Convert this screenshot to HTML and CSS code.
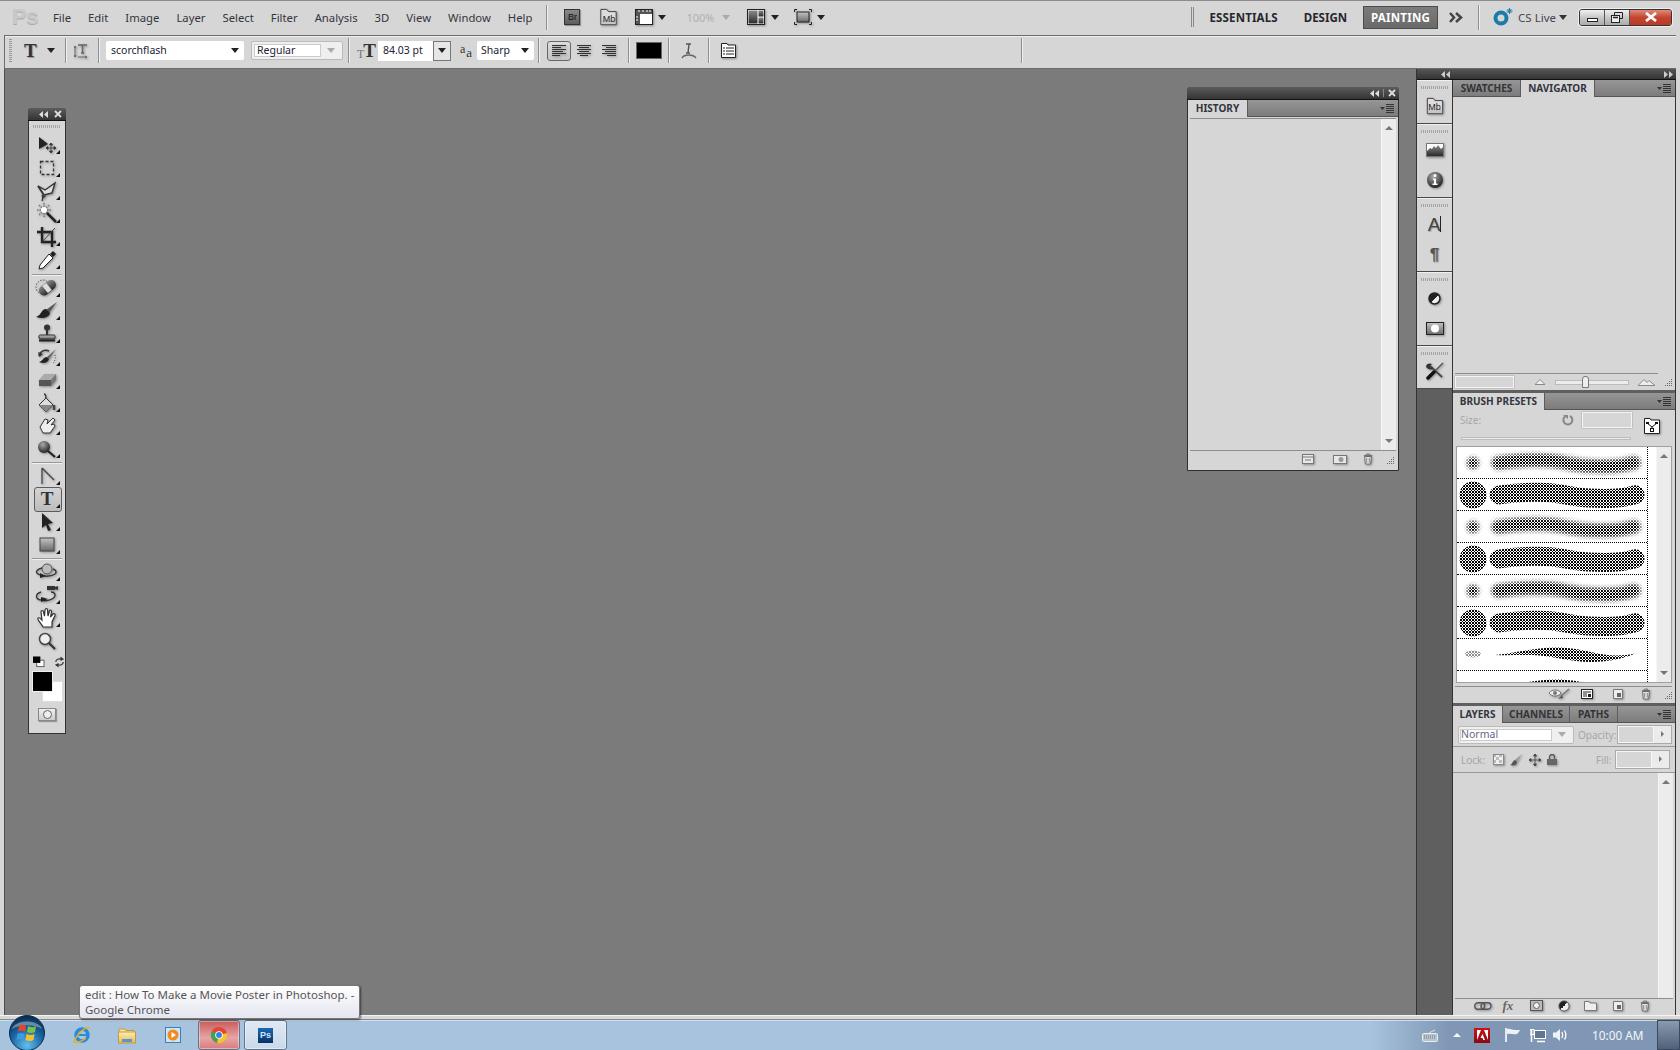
FILE: index.html
```html
<!DOCTYPE html>
<html lang="en">
<head>
<meta charset="utf-8">
<title>Adobe Photoshop CS5</title>
<link rel="stylesheet" href="styles.css">
</head>
<body>
<svg class="defs" aria-hidden="true">
  <defs>
    <pattern id="chk" width="3" height="3" patternUnits="userSpaceOnUse">
      <rect width="3" height="3" fill="#fff"/>
      <rect width="1.500" height="1.500" fill="#000" shape-rendering="crispEdges"/>
      <rect x="1.500" y="1.500" width="1.500" height="1.500" fill="#000" shape-rendering="crispEdges"/>
    </pattern>
    <linearGradient id="gDark" x1="0" y1="0" x2="0" y2="1"><stop offset="0" stop-color="#8a8a8a"/><stop offset="1" stop-color="#2a2a2a"/></linearGradient>
    <linearGradient id="gMid" x1="0" y1="0" x2="0" y2="1"><stop offset="0" stop-color="#c4c4c4"/><stop offset="1" stop-color="#6a6a6a"/></linearGradient>
    <linearGradient id="gDiag" x1="0" y1="0" x2="1" y2="1"><stop offset="0" stop-color="#222"/><stop offset=".5" stop-color="#222"/><stop offset=".5" stop-color="#eee"/><stop offset="1" stop-color="#eee"/></linearGradient>
    <radialGradient id="gBall" cx=".4" cy=".3" r=".8"><stop offset="0" stop-color="#aaa"/><stop offset="1" stop-color="#111"/></radialGradient>
    <radialGradient id="gOrb" cx=".5" cy=".85" r=".8"><stop offset="0" stop-color="#5fc0ee"/><stop offset=".55" stop-color="#1d6aa8"/><stop offset="1" stop-color="#0a2f55"/></radialGradient>
    <linearGradient id="gFolder" x1="0" y1="0" x2="0" y2="1"><stop offset="0" stop-color="#fff0b0"/><stop offset="1" stop-color="#e0b95a"/></linearGradient>
    <filter id="soft" x="-30%" y="-60%" width="160%" height="220%"><feGaussianBlur stdDeviation="2.200"/></filter>
    <mask id="mSoft"><g filter="url(#soft)"><circle cx="16" cy="16" r="6" fill="#fff"/><path d="M41 16C60 13 75 13 89 13.500S115 18 132 19S165 20 177 15.700" fill="none" stroke="#fff" stroke-width="13" stroke-linecap="round"/></g></mask>
    <symbol id="softRow" viewBox="0 0 191 31"><rect width="191" height="31" fill="url(#chk)" mask="url(#mSoft)"/></symbol>
    <symbol id="hardRow" viewBox="0 0 191 31"><circle cx="16" cy="16" r="13.500" fill="url(#chk)"/><path d="M42 16C60 13 75 13 89 13.500S115 18 132 19S165 20 178 15.700" fill="none" stroke="url(#chk)" stroke-width="19" stroke-linecap="round"/></symbol>
    <symbol id="chalkRow" viewBox="0 0 191 31"><ellipse cx="16" cy="15" rx="8" ry="3.500" fill="url(#chk)" opacity=".45"/><path d="M38 16C70 12 85 7 110 9S150 21 180 14C150 26 125 24 100 19S60 17 38 16Z" fill="url(#chk)"/></symbol>
    <symbol id="collapseL" viewBox="0 0 9 7"><path d="M4 0V7L0 3.500ZM9 0V7L5 3.500Z" fill="currentColor"/></symbol>
    <symbol id="collapseR" viewBox="0 0 9 7"><path d="M0 0V7L4 3.500ZM5 0V7L9 3.500Z" fill="currentColor"/></symbol>
    <symbol id="closeX" viewBox="0 0 8 8"><path d="M1 1L7 7M7 1L1 7" stroke="currentColor" stroke-width="1.800"/></symbol>
    <symbol id="pmenu" viewBox="0 0 14 9"><path d="M0 3H5L2.500 6Z" fill="#333"/><path d="M6 .5H14M6 2.500H14M6 4.500H14M6 6.500H14M6 8.500H14" stroke="#333"/></symbol>
    <symbol id="grip" viewBox="0 0 9 9"><path d="M7 1h1v1H7zM5 3h1v1H5zM7 3h1v1H7zM3 5h1v1H3zM5 5h1v1H5zM7 5h1v1H7zM1 7h1v1H1zM3 7h1v1H3zM5 7h1v1H5zM7 7h1v1H7z" fill="#666"/></symbol>
    <symbol id="trash" viewBox="0 0 12 14"><path d="M4 2V1H8V2M1 3H11" stroke="#555" fill="none"/><path d="M2 4H10L9.200 13H2.800Z" fill="#eee" stroke="#555"/><path d="M4.500 5.500V11.500M7.500 5.500V11.500" stroke="#666"/></symbol>
    <symbol id="newdoc" viewBox="0 0 12 12"><path d="M1.500 1.500H10.500V10.500H1.500Z" fill="#ededed" stroke="#777"/><path d="M5 5H9V9H5Z" fill="#666"/></symbol>
    <symbol id="mb" viewBox="0 0 20 20"><path d="M1.500 1.500H8L10 4H18.500V18.500H1.500Z" fill="#dcdcdc" stroke="#333"/><path d="M2 13H18V18H2Z" fill="#b8b8b8" opacity=".6"/></symbol>
    <symbol id="eyedrop" viewBox="0 0 24 22"><path d="M18 2L21 5L18 8L15 5Z" fill="#222"/><path d="M14 5L18 9L8 19L4 20L5 16Z" fill="#fff" stroke="#222"/></symbol>
  </defs>
</svg>

<div class="app">
  <header class="menubar">
    <span class="pslogo">Ps</span>
    <nav class="menus">
      <span>File</span><span>Edit</span><span>Image</span><span>Layer</span><span>Select</span><span>Filter</span><span>Analysis</span><span>3D</span><span>View</span><span>Window</span><span>Help</span>
    </nav>
    <i class="vsep sep-help"></i>
    <span class="br-ic">Br</span>
    <svg class="ic mb-top" width="19" height="18" viewBox="0 0 20 20"><use href="#mb"/></svg>
    <span class="mb-label">Mb</span>
    <svg class="ic arrange" width="18" height="16" viewBox="0 0 18 16"><rect x=".5" y=".5" width="17" height="15" fill="#fff" stroke="#222"/><path d="M1 1H17V5H1ZM1 5H5V15H1Z" fill="#555"/><path d="M4 1V3M8 1V3M12 1V3M15 1V3M1 8H3M1 11H3" stroke="#fff"/></svg>
    <i class="caret c-arr"></i>
    <span class="zoomtxt">100%</span>
    <i class="caret caret-dis"></i>
    <svg class="ic layout" width="18" height="16" viewBox="0 0 18 16"><rect x=".5" y=".5" width="17" height="15" fill="#fff" stroke="#222"/><rect x="1.500" y="1.500" width="9" height="13" fill="url(#gDark)"/><rect x="11.500" y="1.500" width="5" height="6" fill="url(#gDark)"/><rect x="11.500" y="8.500" width="5" height="6" fill="url(#gDark)"/></svg>
    <i class="caret c-lay"></i>
    <svg class="ic screen" width="18" height="16" viewBox="0 0 18 16"><path d="M.5 3V.5H3M15 .5H17.500V3M.5 13V15.500H3M15 15.500H17.500V13" fill="none" stroke="#222"/><rect x="3" y="3" width="12" height="10" fill="url(#gMid)" stroke="#222"/></svg>
    <i class="caret c-scr"></i>
    <span class="spacer"></span>
    <i class="dblsep"></i>
    <span class="ws ws-ess">ESSENTIALS</span>
    <span class="ws ws-des">DESIGN</span>
    <span class="ws ws-on">PAINTING</span>
    <svg class="more" width="15" height="11" viewBox="0 0 15 11"><path d="M1 1L5 5.500L1 10M7 1L12 5.500L7 10" fill="none" stroke="#444" stroke-width="2.500"/></svg>
    <i class="vsep sep-cs"></i>
    <svg class="cs" width="21" height="18" viewBox="0 0 21 18"><circle cx="8" cy="10" r="5.500" fill="none" stroke="#1c7ba8" stroke-width="4"/><path d="M16.500 0V6M13.500 3H19.500M14.500 1L18.500 5M18.500 1L14.500 5" stroke="#1c7ba8"/></svg>
    <span class="cslive">CS Live</span>
    <i class="caret c-cs"></i>
    <div class="winbtns">
      <span class="wb wb-min"><i></i></span>
      <span class="wb wb-max"><svg width="12" height="11" viewBox="0 0 12 11"><path d="M3.500 3V.5H11.500V6.500H8.500" fill="none" stroke="#222"/><rect x=".5" y="3.500" width="8" height="7" fill="#eee" stroke="#222"/><path d="M2 5.500H7" stroke="#222" stroke-width="1.500"/></svg></span>
      <span class="wb wb-close"><svg width="14" height="10" viewBox="0 0 14 10"><path d="M2 1L12 9M12 1L2 9" stroke="#fff" stroke-width="2.800"/></svg></span>
    </div>
  </header>

  <div class="optbar">
    <i class="dots-v"></i>
    <span class="opt-t">T</span>
    <i class="caret c-t"></i>
    <i class="vsep s-a"></i>
    <svg class="ic orient" width="14" height="16" viewBox="0 0 14 16"><path d="M1 3V14M1 3L0 5M1 3L2 5M1 14L0 12M1 14L2 12" stroke="#666" fill="none"/><path d="M4 2H13M8.500 2V10M7 10H10" stroke="#666" stroke-width="1.500"/><path d="M4 14H13M13 14L11 13M13 14L11 15" stroke="#666" fill="none"/></svg>
    <i class="vsep s-b"></i>
    <div class="combo c-font"><span>scorchflash</span><i class="caret"></i></div>
    <div class="combo c-style"><span class="inner">Regular</span><i class="caret caret-dis"></i></div>
    <i class="vsep s-c"></i>
    <span class="opt-tt"><small>T</small>T</span>
    <div class="sizebox"><span>84.03 pt</span><b><i class="caret"></i></b></div>
    <span class="opt-aa"><small>a</small>a</span>
    <div class="combo c-aa"><span>Sharp</span><i class="caret"></i></div>
    <i class="vsep s-d"></i>
    <span class="alignbtn on"><svg class="ic" width="15" height="12" viewBox="0 0 15 12"><path d="M0 .5H14M0 2.500H9M0 4.500H14M0 6.500H11M0 8.500H14M0 10.500H8" stroke="#333"/></svg></span>
    <svg class="ic al-c" width="14" height="12" viewBox="0 0 14 12"><path d="M0 .5H14M2 2.500H12M0 4.500H14M2 6.500H12M0 8.500H14M3 10.500H11" stroke="#333"/></svg>
    <svg class="ic al-r" width="14" height="12" viewBox="0 0 14 12"><path d="M0 .5H14M4 2.500H14M0 4.500H14M3 6.500H14M0 8.500H14M5 10.500H14" stroke="#333"/></svg>
    <i class="vsep s-e"></i>
    <span class="colorbox"></span>
    <i class="vsep s-f"></i>
    <svg class="warp" width="16" height="18" viewBox="0 0 16 18"><path d="M5 2H10M8 2L7 11M5 11H9" stroke="#555" stroke-width="1.400" fill="none"/><path d="M1 16C3 12 12 12 15 16" stroke="#666" stroke-width="1.400" fill="none"/></svg>
    <i class="vsep s-g"></i>
    <svg class="ic panels" width="15" height="15" viewBox="0 0 15 15"><path d="M.5 .5H6L7 2H14.500V14.500H.5Z" fill="#fff" stroke="#222"/><path d="M2 5H4M5 5H13M2 8H4M5 8H13M2 11H4M5 11H13" stroke="#222" stroke-width="1.200"/></svg>
    <i class="vsep s-h"></i>
  </div>

  <main class="work">
    <section class="canvas">
      <aside class="toolbox">
        <div class="fhead fhead-tool"><svg class="fa" width="9" height="7"><use href="#collapseL"/></svg><svg class="fx" width="8" height="8"><use href="#closeX"/></svg></div>
        <i class="dots-h"></i>
        <div class="tool fly"><svg class="ic" width="24" height="22" viewBox="0 0 24 22"><path d="M4 3L13 10L4 15Z" fill="#222"/><path d="M16 9V19M11 14H21M16 9L14.500 11H17.500ZM16 19L14.500 17H17.500ZM11 14L13 12.500V15.500ZM21 14L19 12.500V15.500Z" stroke="#333" fill="#333" stroke-width=".8"/></svg></div>
        <div class="tool fly"><svg class="ic" width="24" height="22" viewBox="0 0 24 22"><rect x="5.500" y="4.500" width="13" height="13" fill="none" stroke="#333" stroke-width="1.300" stroke-dasharray="3 2"/></svg></div>
        <div class="tool fly"><svg class="ic" width="24" height="22" viewBox="0 0 24 22"><path d="M3 6L10 10L20 3L17 13L9 15Z" fill="#ddd" stroke="#333" stroke-width="1.400"/><path d="M3 6L9 15" stroke="#333" stroke-width="1.400"/><circle cx="8.500" cy="16" r="2" fill="#444"/><path d="M8 17L7 21" stroke="#333" stroke-width="1.300"/></svg></div>
        <div class="tool fly"><svg class="ic" width="24" height="22" viewBox="0 0 24 22"><path d="M9 0V14M2 7H16M4 2L14 12M14 2L4 12" stroke="#777" stroke-width="1.500" stroke-dasharray="1.500 1"/><circle cx="9" cy="7" r="3" fill="#fff"/><path d="M12 10L21 19" stroke="#222" stroke-width="2.500"/></svg></div>
        <div class="tool fly"><svg class="ic" width="24" height="22" viewBox="0 0 24 22"><path d="M7 1V16H21M2 6H17V21" fill="none" stroke="#222" stroke-width="2.400"/><path d="M7 16L20 2" stroke="#444"/></svg></div>
        <div class="tool fly"><svg class="ic" width="24" height="22"><use href="#eyedrop"/></svg></div>
        <i class="tsep tsep-a"></i>
        <div class="tool fly"><svg class="ic" width="24" height="22" viewBox="0 0 24 22"><circle cx="8" cy="10" r="7" fill="none" stroke="#555" stroke-dasharray="1.500 1.500"/><rect x="3" y="6" width="19" height="10" rx="5" transform="rotate(-38 12 11)" fill="url(#gDark)"/><rect x="9.500" y="6.500" width="5" height="9" transform="rotate(-38 12 11)" fill="#ddd"/></svg></div>
        <div class="tool fly"><svg class="ic" width="24" height="22" viewBox="0 0 24 22"><path d="M22 2L11 10L14 13Z" fill="#555"/><path d="M11 9C6 9 7 15 1 17C7 19 14 18 15 13Z" fill="#222"/></svg></div>
        <div class="tool fly"><svg class="ic" width="24" height="22" viewBox="0 0 24 22"><circle cx="12" cy="4.500" r="3" fill="#333"/><path d="M11 7H13V12H11Z" fill="#333"/><rect x="4" y="12" width="16" height="4" rx="1" fill="url(#gMid)" stroke="#333"/><path d="M4 17.500H20" stroke="#222" stroke-width="2"/></svg></div>
        <div class="tool fly"><svg class="ic" width="24" height="22" viewBox="0 0 24 22"><path d="M21 3L12 11L14 13Z" fill="#666"/><path d="M12 11C8 11 8 15 4 16C8 18 13 17 14 13Z" fill="#222"/><path d="M4 10C5 5 10 3 14 5" fill="none" stroke="#333" stroke-width="1.500"/><path d="M3 6L4.500 11L8 8Z" fill="#333"/><path d="M20 9C21 12 20 16 17 18" fill="none" stroke="#555" stroke-dasharray="1 1.500"/></svg></div>
        <div class="tool fly"><svg class="ic" width="24" height="22" viewBox="0 0 24 22"><path d="M9 5H21L16 11H4Z" fill="#aaa"/><path d="M4 11H16V17H4Z" fill="#555"/><path d="M16 11L21 5V11L16 17Z" fill="#777"/></svg></div>
        <div class="tool fly"><svg class="ic" width="24" height="22" viewBox="0 0 24 22"><path d="M9 2C11 2 11 5 11 7" fill="none" stroke="#333" stroke-width="1.300"/><path d="M11 6L18 13L11 20L4 13Z" fill="#ddd" stroke="#333"/><path d="M4 13H18L11 20Z" fill="#888"/><path d="M19 13V18" stroke="#444" stroke-width="2.500"/></svg></div>
        <div class="tool fly"><svg class="ic" width="24" height="22" viewBox="0 0 24 22"><path d="M8 18L5 12L10 4L13 5L12 9L18 3L20 5L16 10L19 9L20 11L15 18Z" fill="#eee" stroke="#333"/></svg></div>
        <div class="tool fly"><svg class="ic" width="24" height="22" viewBox="0 0 24 22"><circle cx="9" cy="9" r="6" fill="url(#gBall)"/><path d="M13 13L20 19" stroke="#222" stroke-width="2.200"/></svg></div>
        <i class="tsep"></i>
        <div class="tool fly"><svg class="ic" width="24" height="22" viewBox="0 0 24 22"><path d="M7 3V19M7 3L19 15" fill="none" stroke="#444" stroke-width="1.300"/></svg></div>
        <div class="tool fly selected"><span class="tglyph">T</span></div>
        <div class="tool fly"><svg class="ic" width="24" height="22" viewBox="0 0 24 22"><path d="M7 2L18 12L13 13L16 19L13 20L11 14L7 17Z" fill="#222"/></svg></div>
        <div class="tool fly"><svg class="ic" width="24" height="22" viewBox="0 0 24 22"><rect x="5" y="4" width="14" height="13" fill="url(#gMid)" stroke="#444"/></svg></div>
        <i class="tsep"></i>
        <div class="tool fly"><svg class="ic" width="24" height="22" viewBox="0 0 24 22"><circle cx="12" cy="8" r="5" fill="#bbb" stroke="#555"/><path d="M7 7C2 8 0 11 3 13C7 16 16 16 20 13C22 11 21 9 18 8" fill="none" stroke="#333" stroke-width="1.400"/><path d="M5 12L11 15L5 17Z" fill="#222"/></svg></div>
        <div class="tool fly"><svg class="ic" width="24" height="22" viewBox="0 0 24 22"><path d="M6 8C0 10 0 15 6 16C12 18 21 15 20 10C19.500 9 18 8 16 8" fill="none" stroke="#333" stroke-width="1.400"/><path d="M6 13L13 15L6 18Z" fill="#222"/><rect x="12" y="2" width="8" height="4" fill="#333"/><path d="M20 3L23 2V6L20 5Z" fill="#333"/></svg></div>
        <div class="tool fly"><svg class="ic" width="24" height="22" viewBox="0 0 24 22"><path d="M8 20C6 16 2 13 3 11C4 10 6 12 7 13L6 5C6 3 8 3 8.500 5L9.500 9L10 3C10.500 1 12.500 1 12.500 3L13 9L14.500 4C15 2.500 17 3 16.500 5L15.500 10L18 7C19 6 20.500 7 20 8.500L17 15V20Z" fill="#fff" stroke="#333" stroke-width="1.200"/></svg></div>
        <div class="tool"><svg class="ic" width="24" height="22" viewBox="0 0 24 22"><circle cx="10" cy="9" r="5.500" fill="#eee" stroke="#444" stroke-width="1.500"/><path d="M14 13L20 19" stroke="#333" stroke-width="2.200"/></svg></div>
        <div class="miniswatch">
          <svg width="13" height="12" viewBox="0 0 13 12"><rect x="4" y="4" width="8" height="7" fill="#fff" stroke="#555"/><rect x="0" y="0" width="8" height="7" fill="#000"/></svg>
          <svg width="12" height="12" viewBox="0 0 12 12"><path d="M2 6C2 3 5 2 8 3M10 6C10 9 7 10 4 9" fill="none" stroke="#333" stroke-width="1.300"/><path d="M7 0L11 3L7 5ZM5 7L1 9L5 12Z" fill="#333"/></svg>
        </div>
        <div class="fgbg"><span class="bg"></span><span class="fg"></span></div>
        <div class="quickmask"><i></i></div>
      </aside>

      <aside class="history">
        <div class="fhead"><svg class="fa" width="9" height="7"><use href="#collapseL"/></svg><b class="fdiv"></b><svg class="fx" width="8" height="8"><use href="#closeX"/></svg></div>
        <div class="tabs">
          <span class="tab on t-hist">HISTORY</span><span class="tabfill"></span><svg class="pm" width="14" height="9"><use href="#pmenu"/></svg>
        </div>
        <div class="hbody">
          <div class="hlist"></div>
          <div class="scroll"><i class="up"></i><i class="down"></i></div>
        </div>
        <div class="pfoot hfoot">
          <svg class="ic" width="12" height="10" viewBox="0 0 12 10"><rect x=".5" y=".5" width="11" height="9" fill="#e8e8e8" stroke="#777"/><path d="M.5 3H11.500M3 6H9" stroke="#777"/></svg>
          <svg class="ic" width="14" height="10" viewBox="0 0 14 10"><rect x=".5" y="1.500" width="13" height="8" fill="#e8e8e8" stroke="#777"/><circle cx="8" cy="5.500" r="2.500" fill="#999"/></svg>
          <svg class="ic" width="10" height="12" viewBox="0 0 12 14"><use href="#trash"/></svg>
          <svg class="gr" width="9" height="9"><use href="#grip"/></svg>
        </div>
      </aside>
    </section>

    <aside class="dock">
      <div class="dockstrip"><svg class="da" width="9" height="7"><use href="#collapseL"/></svg><svg class="db" width="9" height="7"><use href="#collapseR"/></svg></div>
      <div class="dockbody">
        <div class="iconcol">
          <div class="igroup g1"><i class="dots-h"></i><span class="dic"><svg class="ic" width="18" height="18" viewBox="0 0 20 20"><use href="#mb"/></svg><b class="mbtxt">Mb</b></span></div>
          <div class="igroup g2"><i class="dots-h"></i>
            <span class="dic"><svg class="ic" width="18" height="14" viewBox="0 0 18 14"><rect x=".5" y=".5" width="17" height="13" fill="#fff" stroke="#777"/><path d="M1 13V8L4 5L6 6L8 3L10 5L12 2L15 6L17 4V13Z" fill="url(#gDark)"/></svg></span>
            <span class="dic"><svg class="ic" width="18" height="18" viewBox="0 0 18 18"><circle cx="9" cy="9" r="8" fill="url(#gBall)"/><circle cx="9" cy="4.500" r="1.500" fill="#fff"/><path d="M7 7.500H10V12.500H11.500V14H6.500V12.500H8V9H7Z" fill="#fff"/></svg></span>
          </div>
          <div class="igroup g3"><i class="dots-h"></i>
            <span class="dic"><span class="chartxt">A</span><b class="cursorbar"></b></span>
            <span class="dic"><span class="paratxt">¶</span></span>
          </div>
          <div class="igroup g4"><i class="dots-h"></i>
            <span class="dic"><svg class="ic" width="13" height="13" viewBox="0 0 13 13"><circle cx="6.500" cy="6.500" r="5.500" fill="url(#gDiag)" stroke="#222" stroke-width="1.500"/></svg></span>
            <span class="dic"><svg class="ic" width="18" height="13" viewBox="0 0 18 13"><rect x=".5" y=".5" width="17" height="12" fill="url(#gMid)" stroke="#222"/><circle cx="9" cy="6.500" r="4" fill="#fff"/></svg></span>
          </div>
          <div class="igroup g5"><i class="dots-h"></i>
            <span class="dic"><svg class="ic" width="20" height="18" viewBox="0 0 20 18"><path d="M5 4L17 15" stroke="#444" stroke-width="1.700"/><path d="M1 4C2 1 5 1 7 2L5 4L6 6L8 5C8 8 5 8 4 7C3 7 1 6 1 4Z" fill="#333"/><path d="M18 1L9 10" stroke="#555" stroke-width="1.400"/><path d="M9 10L3 16" stroke="#111" stroke-width="3.500" stroke-linecap="round"/></svg></span>
          </div>
        </div>

        <div class="panels-col">
          <section class="panel p-nav">
            <div class="tabs">
              <span class="tab t-sw">SWATCHES</span><span class="tab on t-nav">NAVIGATOR</span><span class="tabfill"></span><svg class="pm" width="14" height="9"><use href="#pmenu"/></svg>
            </div>
            <div class="navbody"></div>
            <div class="navfoot">
              <span class="field nf-in"></span>
              <svg class="nf-m1" width="10" height="6" viewBox="0 0 10 6"><path d="M0 5.500H10L5 .5Z" fill="#f0f0f0" stroke="#888"/></svg>
              <div class="nf-slider"><i></i></div>
              <svg class="nf-m2" width="18" height="7" viewBox="0 0 18 7"><path d="M0 6.500L6 .5L9 3.500L11 1.500L17 6.500Z" fill="#eee" stroke="#888"/></svg>
              <svg class="gr" width="9" height="9"><use href="#grip"/></svg>
            </div>
          </section>

          <section class="panel p-brush">
            <div class="tabs">
              <span class="tab on t-brush">BRUSH PRESETS</span><span class="tabfill"></span><svg class="pm" width="14" height="9"><use href="#pmenu"/></svg>
            </div>
            <div class="brhead">
              <div class="brsize">
                <span class="lbl">Size:</span>
                <svg class="br-rs" width="12" height="12" viewBox="0 0 12 12"><path d="M3 2.500A4.500 4.500 0 1 0 8 2" fill="none" stroke="#888" stroke-width="2"/><path d="M1 1H6V5Z" fill="#888"/></svg>
                <span class="field br-in"></span>
                <svg class="ic br-fold" width="16" height="16" viewBox="0 0 16 16"><path d="M.5 .5H6L7 2H15.500V15.500H.5Z" fill="#fff" stroke="#222"/><path d="M3 5L8 9L13 5M8 9V13" stroke="#111" fill="none"/><rect x="2" y="4" width="3" height="2" fill="#111"/><rect x="6.500" y="10.500" width="3" height="3" fill="#fff" stroke="#111"/><rect x="11" y="4" width="3" height="2" fill="#111"/></svg>
              </div>
              <div class="br-slide"></div>
            </div>
            <div class="brlist">
              <div class="brrows">
                <div class="brow"><svg width="191" height="31"><use href="#softRow"/></svg></div>
                <div class="brow"><svg width="191" height="31"><use href="#hardRow"/></svg></div>
                <div class="brow"><svg width="191" height="31"><use href="#softRow"/></svg></div>
                <div class="brow"><svg width="191" height="31"><use href="#hardRow"/></svg></div>
                <div class="brow"><svg width="191" height="31"><use href="#softRow"/></svg></div>
                <div class="brow"><svg width="191" height="31"><use href="#hardRow"/></svg></div>
                <div class="brow"><svg width="191" height="31"><use href="#chalkRow"/></svg></div>
                <div class="brow last"><svg width="191" height="31"><use href="#chalkRow"/></svg></div>
              </div>
              <div class="scroll"><i class="up"></i><i class="down"></i></div>
            </div>
            <div class="pfoot brfoot">
              <svg class="ic" width="22" height="12" viewBox="0 0 22 12"><path d="M1 5C4 1 10 1 13 5C10 9 4 9 1 5Z" fill="#eee" stroke="#777"/><circle cx="7" cy="5" r="2" fill="#777"/><path d="M21 1L13 8" stroke="#777" stroke-width="1.500"/><path d="M14 7L10 11L15 10Z" fill="#555"/></svg>
              <svg class="ic" width="12" height="10" viewBox="0 0 12 10"><rect x=".5" y=".5" width="11" height="9" fill="#fff" stroke="#222"/><path d="M2 3H10M2 5H6M2 7H6" stroke="#222"/><rect x="7" y="5" width="3" height="3" fill="#222"/></svg>
              <svg class="ic" width="12" height="12"><use href="#newdoc"/></svg>
              <svg class="ic" width="10" height="12" viewBox="0 0 12 14"><use href="#trash"/></svg>
              <svg class="gr" width="9" height="9"><use href="#grip"/></svg>
            </div>
          </section>

          <section class="panel p-layers">
            <div class="tabs">
              <span class="tab on t-lay">LAYERS</span><span class="tab t-ch">CHANNELS</span><span class="tab t-pa">PATHS</span><span class="tabfill"></span><svg class="pm" width="14" height="9"><use href="#pmenu"/></svg>
            </div>
            <div class="lrow lr1">
              <div class="combo c-blend"><span class="inner">Normal</span><i class="caret caret-dis"></i></div>
              <span class="lbl l-op">Opacity:</span>
              <div class="stepper"><span></span><b></b></div>
            </div>
            <div class="lrow lr2">
              <span class="lbl l-lock">Lock:</span>
              <svg class="ic lk" width="11" height="11" viewBox="0 0 11 11"><rect width="11" height="11" fill="#eee"/><path d="M0 0H3V3H0ZM6 0H9V3H6ZM3 3H6V6H3ZM0 6H3V9H0ZM6 6H9V9H6Z" fill="#bbb"/><rect x=".5" y=".5" width="10" height="10" fill="none" stroke="#888"/></svg>
              <svg class="ic lk" width="13" height="12" viewBox="0 0 13 12"><path d="M12 0L5 6L7 8Z" fill="#999"/><path d="M5 6C2 7 3 10 0 11C4 12 7 11 7 8Z" fill="#555"/></svg>
              <svg class="ic lk" width="12" height="12" viewBox="0 0 12 12"><path d="M6 0V12M0 6H12M6 0L4.500 2H7.500ZM6 12L4.500 10H7.500ZM0 6L2 4.500V7.500ZM12 6L10 4.500V7.500Z" stroke="#444" fill="#444" stroke-width=".8"/></svg>
              <svg class="ic lk" width="10" height="11" viewBox="0 0 10 11"><path d="M2.500 5V3A2.500 2.500 0 0 1 7.500 3V5" fill="none" stroke="#555" stroke-width="1.300"/><rect y="5" width="10" height="6" fill="#666"/></svg>
              <span class="lbl l-fill">Fill:</span>
              <div class="stepper"><span></span><b></b></div>
            </div>
            <div class="lbody"><div class="llist"></div><div class="scroll"><i class="up"></i></div></div>
            <div class="pfoot lfoot">
              <svg class="ic" width="18" height="8" viewBox="0 0 18 8"><rect x=".7" y=".7" width="10" height="6.600" rx="3.300" fill="none" stroke="#555" stroke-width="1.400"/><rect x="7" y=".7" width="10" height="6.600" rx="3.300" fill="none" stroke="#555" stroke-width="1.400"/></svg>
              <span class="fx-t">fx</span>
              <svg class="ic" width="13" height="11" viewBox="0 0 13 11"><rect x=".5" y=".5" width="12" height="10" fill="#bbb" stroke="#555"/><circle cx="6.500" cy="5.500" r="3" fill="#f2f2f2" stroke="#666"/></svg>
              <svg class="ic" width="12" height="12" viewBox="0 0 13 13"><circle cx="6.500" cy="6.500" r="5.500" fill="url(#gDiag)" stroke="#555"/></svg>
              <svg class="ic" width="13" height="10" viewBox="0 0 13 10"><path d="M.5 .5H5L6 2H12.500V9.500H.5Z" fill="#eee" stroke="#777"/></svg>
              <svg class="ic" width="12" height="12"><use href="#newdoc"/></svg>
              <svg class="ic" width="10" height="12" viewBox="0 0 12 14"><use href="#trash"/></svg>
            </div>
          </section>
        </div>
      </div>
    </aside>
  </main>

  <div class="framebot"></div>

  <footer class="taskbar">
    <svg class="orb" width="36" height="36" viewBox="0 0 36 36"><circle cx="18" cy="18" r="17.500" fill="url(#gOrb)" stroke="#0c2a4a"/><path d="M3 14C6 4 30 4 33 14C25 9 11 9 3 14Z" fill="#fff" opacity=".35"/><path d="M10 11C13 9 15 10 17 11L16 17C14 16 12 15 9 17Z" fill="#e8442c"/><path d="M19 11C21 12 24 13 27 11L26 17C23 18.500 20 18 18 17Z" fill="#7dc242"/><path d="M8.500 19C11 17.500 13 18 15.500 19L14.500 25C12 24 10 23.500 7.500 25Z" fill="#3b9ce0"/><path d="M17.500 19C20 20 23 20.500 25.500 19L24.500 25C22 26.500 19 26 16.500 25Z" fill="#f6c02c"/></svg>
    <svg class="tb-ie" width="20" height="20" viewBox="0 0 20 20"><circle cx="10" cy="10" r="6" fill="none" stroke="#2a8bd8" stroke-width="3.500"/><path d="M5 10H15" stroke="#2a8bd8" stroke-width="2"/><path d="M18 3C13 1 5 9 2 17C7 19 12 14 14 13" fill="none" stroke="#e9b020" stroke-width="1.500"/></svg>
    <svg class="tb-ex" width="18" height="18" viewBox="0 0 18 18"><path d="M1 3H7L8 4.500H16V8H1Z" fill="#f6e39a" stroke="#c49a3c"/><rect x=".5" y="6" width="17" height="11" fill="url(#gFolder)" stroke="#c49a3c"/><path d="M4 13H14V16H4Z" fill="#5a97c8"/></svg>
    <svg class="tb-wmp" width="16" height="16" viewBox="0 0 16 16"><rect x=".5" y=".5" width="15" height="15" fill="#cfe4f5" stroke="#3a7fb8"/><circle cx="8" cy="8" r="5.500" fill="#f08a1c"/><path d="M6.500 5L11 8L6.500 11Z" fill="#fff"/></svg>
    <span class="tbtn tbtn-chrome"><svg width="16" height="16" viewBox="0 0 16 16"><circle cx="8" cy="8" r="8" fill="#e8452e"/><path d="M8 8L1.100 4A8 8 0 0 0 6 15.800Z" fill="#3aa757"/><path d="M8 8L15.800 6A8 8 0 0 1 6 15.800Z" fill="#f6c52c"/><circle cx="8" cy="8" r="3.800" fill="#fff"/><circle cx="8" cy="8" r="2.900" fill="#3b7fe0"/></svg></span>
    <span class="tbtn tbtn-ps"><span class="psicon">Ps</span></span>
    <span class="spacer"></span>
    <svg class="tr-kb" width="16" height="13" viewBox="0 0 16 13"><path d="M8 4C8 2 10 3 13 1" fill="none" stroke="#dfe6ee"/><rect x=".5" y="4.500" width="15" height="8" rx="1" fill="#b8c4d0" stroke="#e8edf2"/><path d="M2 7H14M2 9H14" stroke="#777" stroke-dasharray="1 1"/></svg>
    <i class="tr-up"></i>
    <span class="tr-adobe"><svg width="11" height="10" viewBox="0 0 11 10"><path d="M0 0H4L0 10ZM7 0H11V10ZM5.500 3.700L8 10H6.300L5.500 8H3.500Z" fill="#fff"/></svg></span>
    <svg class="tr-flag" width="16" height="14" viewBox="0 0 16 14"><path d="M1 0V14" stroke="#fff" stroke-width="1.600"/><path d="M2 1C5 0 7 2 10 2H15C14 4 13 5 12 6C9 7 5 5 2 6Z" fill="#eef2f6"/></svg>
    <svg class="tr-net" width="16" height="15" viewBox="0 0 16 15"><path d="M1.500 1V14" stroke="#fff" stroke-width="1.500"/><rect x="0" y="1.500" width="4" height="5" fill="none" stroke="#fff"/><rect x="4.500" y="2.500" width="11" height="8" fill="#60758f" stroke="#fff"/><path d="M7 13.500H15" stroke="#fff" stroke-width="1.500"/></svg>
    <svg class="tr-vol" width="15" height="14" viewBox="0 0 15 14"><path d="M0 4.500H3L7 1V13L3 9.500H0Z" fill="#eef2f6"/><path d="M9 4C10 6 10 8 9 10M11.500 2.500C13 5 13 9 11.500 11.500" fill="none" stroke="#fff" stroke-width="1.300"/></svg>
    <span class="clock">10:00 AM</span>
    <span class="showdesk"></span>
  </footer>

  <div class="tooltip">edit : How To Make a Movie Poster in Photoshop. -<br>Google Chrome</div>
</div>
</body>
</html>
```
FILE: styles.css
```css
* { box-sizing: border-box; }
html, body { margin: 0; height: 100%; }
body { background: #d6d6d6; font-family: "Noto Sans", "Liberation Sans", sans-serif; overflow: hidden; color: #333; }
i, b { display: block; font-style: normal; }
.defs { width: 0; height: 0; display: block; overflow: hidden; }
.app { position: relative; width: 1680px; height: 1050px; display: flex; flex-direction: column; overflow: hidden; background: #d6d6d6; }
.spacer { flex: 1; }
.ic { filter: drop-shadow(1px 1px 1px rgba(0,0,0,.35)); flex: none; }
.vsep { width: 2px; height: 25px; border-left: 1px solid #8e8e8e; border-right: 1px solid #efefef; flex: none; }
.caret { width: 0; height: 0; border: 4px solid transparent; border-top: 5px solid #222; border-bottom: 0; flex: none; }
.caret-dis { border-top-color: #aaa; }

/* menu bar */
.menubar { height: 35px; flex: none; display: flex; align-items: center; padding: 0 8px 2px 12px; border-top: 1px solid #8c8c8c; background: #d6d6d6; }
.pslogo { width: 24px; font: bold 22px/1 "Liberation Sans", sans-serif; color: #c9c9c9; text-shadow: 0 1px 0 #aaa; letter-spacing: -.5px; }
.menus { display: flex; gap: 17px; margin-left: 17px; font-size: 11.3px; color: #35353d; }
.sep-help { margin-left: 14px; }
.br-ic { width: 16px; height: 16px; margin-left: 16px; background: linear-gradient(#8a8a8a, #5d5d5d); border: 1px solid #333; font: 9px/14px "Liberation Sans", sans-serif; text-align: center; color: #111; box-shadow: 1px 1px 1px rgba(0,0,0,.3); }
.mb-top { margin-left: 19px; }
.mb-label { position: relative; width: 19px; margin-left: -19px; font: 9px/12px "Liberation Sans", sans-serif; text-align: center; color: #222; padding-top: 4px; }
.arrange { margin-left: 17px; }
.c-arr { margin-left: 5px; }
.zoomtxt { margin-left: 20px; font-size: 11px; color: #b0b0b0; width: 31px; }
.caret-dis { margin-left: 5px; }
.layout { margin-left: 17px; }
.c-lay { margin-left: 6px; }
.screen { margin-left: 15px; }
.c-scr { margin-left: 5px; }
.dblsep { width: 3px; height: 20px; border-left: 1px solid #888; border-right: 1px solid #888; flex: none; }
.ws { font: bold 11.5px "Noto Sans", sans-serif; color: #26262e; flex: none; }
.ws-ess { margin-left: 16px; letter-spacing: .15px; }
.ws-des { margin-left: 26px; }
.ws-on { margin-left: 16px; width: 75px; height: 23px; line-height: 21px; text-align: center; color: #fff; background: linear-gradient(#7c7c7c, #6a6a6a); border: 1px solid #4b4b4b; letter-spacing: .25px; }
.more { margin-left: 11px; }
.sep-cs { margin-left: 14px; }
.cs { margin-left: 13px; }
.cslive { margin-left: 4px; font-size: 11.5px; color: #45454d; }
.c-cs { margin-left: 3px; border-top-color: #333; }
.winbtns { margin-left: 12px; display: flex; height: 17px; border: 1px solid #333; border-radius: 3px; overflow: hidden; box-shadow: 0 0 0 1px #eee; }
.wb { display: flex; align-items: center; justify-content: center; background: linear-gradient(#f0f0f0, #c8c8c8 50%, #aaa); border-right: 1px solid #555; width: 25px; }
.wb-min i { width: 11px; height: 4px; border: 1px solid #222; background: #fff; margin-top: 5px; }
.wb-close { width: 41px; border: 0; background: linear-gradient(#e08a78, #c4452f 50%, #b83a28); }

/* options bar */
.optbar { height: 33px; flex: none; margin-left: 4px; margin-right: 4px; padding-bottom: 3px; display: flex; align-items: center; background: #d6d6d6; border-top: 1px solid #6c6c6c; border-left: 1px solid #6c6c6c; box-shadow: inset 0 1px 0 #eee; font-size: 10.5px; }
.dots-v { width: 3px; height: 24px; margin-left: 4px; background: repeating-linear-gradient(#999 0 1px, transparent 1px 2px); flex: none; }
.opt-t { margin-left: 12px; font: bold 19px/1 "Liberation Serif", serif; color: #333; width: 14px; text-shadow: 1px 1px 1px rgba(0,0,0,.3); }
.c-t { margin-left: 9px; }
.s-a { margin-left: 10px; }
.orient { margin-left: 7px; }
.s-b { margin-left: 10px; }
.combo { display: flex; align-items: center; height: 19px; background: #fff; border-radius: 2px; flex: none; position: relative; color: #223; }
.combo > span { flex: 1; padding-bottom: 1px; }
.combo > .caret { margin: 0 5px 0 0; }
.c-font { width: 138px; margin-left: 6px; padding-left: 5px; font-size: 10.5px; }
.c-style { width: 92px; margin-left: 7px; padding: 2px; border: 1px solid #bbb; background: #efefef; }
.c-style .inner { background: #fff; border: 1px solid #ccc; height: 100%; line-height: 10px; padding: 0 0 0 2px; margin-right: 6px; }
.c-blend .inner { background: #fff; border: 1px solid #ccc; height: 100%; line-height: 9px; padding: 0; margin-right: 6px; }
.s-c { margin-left: 5px; }
.opt-tt { margin-left: 7px; width: 18px; font: bold 19px/1 "Liberation Serif", serif; color: #333; display: flex; align-items: flex-end; }
.opt-tt small { font-size: 12px; font-weight: normal; color: #777; margin-right: -1px; }
.sizebox { margin-left: 3px; width: 73px; height: 20px; display: flex; background: #fff; }
.sizebox span { flex: 1; line-height: 19px; padding-left: 5px; color: #223; }
.sizebox b { width: 18px; background: #e6e6e6; border: 1px solid #777; display: flex; align-items: center; justify-content: center; }
.opt-aa { margin-left: 9px; width: 14px; font: 13px/1 "Liberation Serif", serif; color: #333; display: flex; align-items: flex-end; }
.opt-aa small { font-size: 12px; margin-bottom: 4px; margin-right: 1px; }
.c-aa { width: 57px; margin-left: 3px; padding-left: 4px; }
.s-d { margin-left: 4px; }
.alignbtn { margin-left: 7px; width: 24px; height: 20px; display: flex; align-items: center; justify-content: center; flex: none; }
.alignbtn.on { border: 1px solid #666; border-radius: 3px; background: linear-gradient(#ddd, #c4c4c4); }
.al-c { margin-left: 6px; }
.al-r { margin-left: 11px; }
.s-e { margin-left: 12px; }
.colorbox { margin-left: 6px; width: 26px; height: 17px; background: #000; border: 1px solid #666; flex: none; }
.s-f { margin-left: 6px; }
.warp { margin-left: 11px; flex: none; }
.s-g { margin-left: 11px; }
.panels { margin-left: 11px; }
.s-h { margin-left: 285px; }

/* workspace */
.work { flex: 1; min-height: 0; display: flex; margin: 0 4px; border-top: 1px solid #6c6c6c; }
.canvas { flex: 1; position: relative; background: #7b7b7b; border-left: 1px solid #4e4e4e; }
.framebot { height: 5px; flex: none; background: #d9d9d9; border-top: 1px solid #f4f4f4; border-bottom: 1px solid #8a8a8a; }
.fhead { height: 13px; background: linear-gradient(#5c5c5c, #343434); display: flex; align-items: center; justify-content: flex-end; gap: 4px; padding-right: 3px; color: #ddd; border-bottom: 1px solid #111; border-radius: 3px 3px 0 0; flex: none; }
.fdiv { width: 1px; height: 8px; background: #888; }
.dots-h { display: block; height: 3px; background: repeating-linear-gradient(90deg, #a4a4a4 0 1px, transparent 1px 2px); }

/* floating tool palette */
.toolbox { position: absolute; left: 23px; top: 39px; width: 38px; height: 626px; background: #d6d6d6; border: 1px solid #333; border-top: 0; border-radius: 3px 3px 0 0; display: flex; flex-direction: column; }
.fhead-tool { margin: 0 -1px; gap: 6px; padding-right: 4px; }
.toolbox > .dots-h { margin: 4px 4px 5px; flex: none; }
.tool { height: 23px; flex: none; display: flex; align-items: center; justify-content: center; position: relative; }
.fly::after { content: ""; position: absolute; right: 5px; bottom: 2px; border: 2px solid transparent; border-right-color: #111; border-bottom-color: #111; }
.tsep { height: 1px; margin: 2px 3px 1px; background: #999; box-shadow: 0 1px 0 #f0f0f0; flex: none; }
.tsep-a { margin-top: 3px; }
.selected::before { content: ""; position: absolute; left: 5px; top: 0; width: 26px; height: 23px; border: 1px solid #5c5c5c; border-radius: 3px; background: linear-gradient(#d4d4d4, #bcbcbc); }
.tglyph { position: relative; font: bold 19px/1 "Liberation Serif", serif; color: #333; }
.miniswatch { display: flex; gap: 9px; margin: 2px 0 0 4px; height: 15px; align-items: center; flex: none; }
.fgbg { position: relative; width: 31px; height: 32px; margin: 2px 0 0 3px; flex: none; }
.fgbg span { display: block; width: 21px; height: 21px; position: absolute; border: 1px solid #eee; }
.fgbg .fg { background: #000; left: 0; top: 0; }
.fgbg .bg { background: #fff; left: 10px; top: 10px; border-color: #ddd; }
.quickmask { width: 18px; height: 13px; margin: 5px 0 0 9px; flex: none; background: linear-gradient(#eee, #ccc); border: 1px solid #888; display: flex; align-items: center; justify-content: center; box-shadow: 1px 1px 1px rgba(0,0,0,.3); }
.quickmask i { width: 9px; height: 9px; border: 1px solid #666; border-radius: 50%; background: #eee; }

/* tabs */
.tabs { height: 17px; flex: none; display: flex; align-items: stretch; position: relative; background: linear-gradient(#969696, #7c7c7c); border-bottom: 1px solid #555; }
.tab { font: bold 10px/16px "Noto Sans", sans-serif; color: #333338; text-align: center; flex: none; border-right: 1px solid #5c5c5c; }
.tab.on { background: #d6d6d6; height: 17px; color: #34343e; }
.tabfill { flex: 1; }
.pm { align-self: center; margin-right: 4px; flex: none; }
.t-hist { width: 60px; }
.t-sw { width: 68px; }
.t-nav { width: 74px; }
.t-brush { width: 92px; }
.t-lay { width: 50px; }
.t-ch { width: 67px; }
.t-pa { width: 48px; }

/* history */
.history { position: absolute; left: 1182px; top: 18px; width: 212px; height: 384px; background: #d6d6d6; border: 1px solid #2e2e2e; border-radius: 3px 3px 0 0; display: flex; flex-direction: column; }
.history .fhead { margin: -1px -1px 0; }
.hbody { flex: 1; display: flex; margin: 1px 2px 0; border-top: 1px solid #8e8e8e; min-height: 0; }
.hlist { flex: 1; }
.scroll { width: 15px; background: #ececec; border-left: 1px solid #f6f6f6; display: flex; flex-direction: column; justify-content: space-between; align-items: center; padding: 7px 0; flex: none; }
.scroll i { width: 0; height: 0; border: 4px solid transparent; }
.scroll .up { border-top: 0; border-bottom: 4px solid #777; }
.scroll .down { border-bottom: 0; border-top: 4px solid #777; }
.pfoot { flex: none; display: flex; align-items: center; border-top: 1px solid #8e8e8e; }
.hfoot { height: 20px; margin: 0 2px; padding: 0 0 4px 112px; }
.hfoot > :nth-child(2) { margin-left: 19px; }
.hfoot > :nth-child(3) { margin-left: 16px; }
.hfoot > :nth-child(4) { margin: 4px 0 0 13px; }
.gr { flex: none; }

/* dock */
.dock { width: 260px; flex: none; display: flex; flex-direction: column; background: #5f5f5f; border-left: 1px solid #333; }
.dockstrip { height: 11px; flex: none; display: flex; align-items: center; justify-content: space-between; padding: 0 3px 0 24px; background: linear-gradient(#555, #343434); color: #ccc; border-bottom: 1px solid #111; }
.dockbody { flex: 1; min-height: 0; display: flex; }
.iconcol { width: 36px; flex: none; border-right: 1px solid #333; }
.igroup { background: #d6d6d6; border-bottom: 1px solid #4a4a4a; border-top: 1px solid #f0f0f0; display: flex; flex-direction: column; align-items: center; padding-top: 5px; }
.igroup .dots-h { width: 28px; flex: none; }
.g1 { height: 44px; }
.g2, .g3, .g4 { height: 74px; }
.g5 { height: 43px; }
.dic { position: relative; height: 30px; width: 100%; display: flex; align-items: center; justify-content: center; flex: none; }
.igroup .dots-h + .dic { margin-top: 2px; }
.g5 .dots-h + .dic { margin-top: 1px; }
.mbtxt { position: absolute; left: 0; right: 0; top: 10px; text-align: center; font: 9px/12px "Liberation Sans", sans-serif; color: #222; }
.chartxt { font: 19px/1 "Liberation Sans", sans-serif; color: #444; text-shadow: 1px 1px 1px rgba(0,0,0,.3); }
.cursorbar { width: 1px; height: 16px; background: #222; }
.paratxt { font: bold 17px/1 "Liberation Sans", sans-serif; color: #555; text-shadow: 1px 1px 1px rgba(0,0,0,.3); }
.panels-col { flex: 1; min-width: 0; display: flex; flex-direction: column; border-right: 1px solid #333; gap: 3px; }
.panel { background: #d6d6d6; display: flex; flex-direction: column; flex: none; }
.p-nav { height: 310px; }
.navbody { flex: 1; }
.navfoot { height: 17px; flex: none; margin: 0 17px 0 2px; display: flex; align-items: center; border-top: 1px solid #8e8e8e; position: relative; }
.field { display: block; border: 1px solid #f4f4f4; background: #d6d6d6; box-shadow: 0 0 0 .5px #aaa; }
.nf-in { width: 59px; height: 12px; }
.nf-m1 { margin-left: 21px; flex: none; }
.nf-slider { width: 74px; height: 5px; margin-left: 10px; background: #ececec; border: 1px solid #bbb; position: relative; flex: none; }
.nf-slider i { position: absolute; left: 26px; top: -5px; width: 7px; height: 12px; background: #eee; border: 1px solid #777; border-radius: 3px 3px 0 0; }
.nf-m2 { margin-left: 9px; flex: none; }
.navfoot .gr { position: absolute; right: -15px; top: 4px; }

/* brush presets */
.p-brush { height: 310px; }
.brhead { height: 36px; flex: none; padding: 1px 3px 0 7px; }
.brsize { display: flex; align-items: center; height: 18px; }
.lbl { font-size: 10px; color: #a6a6a6; flex: none; }
.br-rs { margin-left: 81px; flex: none; }
.br-in { width: 50px; height: 16px; margin-left: 8px; }
.br-fold { margin: 12px 0 0 12px; }
.br-slide { width: 170px; height: 3px; margin: 8px 0 0 1px; background: #ececec; border: 1px solid #bbb; }
.brlist { height: 237px; margin: 0 3px; display: flex; border: 1px solid #a0a0a0; background: #fff; flex: none; overflow: hidden; }
.brrows { flex: 1; border-right: 1px dotted #000; min-width: 0; }
.brow { height: 32px; border-bottom: 1px dotted #000; overflow: hidden; }
.brow svg { display: block; }
.brow.last { border: 0; }
.brlist .scroll { margin-left: 8px; width: 15px; background: #ececec; }
.brfoot { height: 17px; margin: 3px 3px 0 2px; padding: 0 0 3px 93px; }
.brfoot > :nth-child(2) { margin-left: 11px; }
.brfoot > :nth-child(3) { margin-left: 19px; }
.brfoot > :nth-child(4) { margin-left: 17px; }
.brfoot > :nth-child(5) { margin: 3px 0 0 13px; }

/* layers */
.p-layers { flex: 1; min-height: 0; }
.lrow { flex: none; display: flex; align-items: center; padding-left: 5px; }
.lr1 { height: 24px; border-bottom: 1px solid #999; }
.c-blend { width: 116px; height: 18px; background: #efefef; border: 1px solid #bbb; padding: 2px 2px 2px 1px; font-size: 10.5px; color: #668; }
.l-op { margin-left: 4px; width: 36px; }
.stepper { margin-left: 3px; width: 55px; height: 19px; display: flex; border: 1px solid #aaa; flex: none; background: #e8e8e8; }
.stepper span { flex: 1; border: 1px solid #f6f6f6; background: #d6d6d6; }
.stepper b { width: 17px; background: #ebebeb; position: relative; }
.stepper b::after { content: ""; position: absolute; left: 7px; top: 5px; border: 3px solid transparent; border-left: 3px solid #777; }
.lr2 { height: 26px; border-bottom: 1px solid #999; padding-left: 8px; }
.l-lock { width: 32px; }
.lk { margin-right: 6px; }
.l-fill { margin-left: 33px; width: 16px; }
.lbody { flex: 1; min-height: 0; display: flex; }
.llist { flex: 1; }
.lbody .scroll { margin-right: 2px; }
.lfoot { height: 17px; margin: 0 2px; padding: 0 0 3px 14px; display: grid; grid-template-columns: repeat(7, 27px); justify-items: center; align-items: center; }
.fx-t { font: italic bold 13px/1 "Liberation Serif", serif; color: #666; width: 14px; }

/* taskbar */
.taskbar { height: 30px; flex: none; display: flex; align-items: center; background: linear-gradient(90deg, #a8c3dd 0, #a8c3dd 1370px, #7f97b4 1450px, #7f97b4 100%); box-shadow: inset 0 1px 0 #cfdfee; }
.orb { margin: -5px 0 0 9px; flex: none; }
.tb-ie { margin-left: 27px; flex: none; }
.tb-ex { margin-left: 26px; flex: none; }
.tb-wmp { margin-left: 29px; flex: none; }
.tbtn { height: 30px; display: flex; align-items: center; justify-content: center; flex: none; border: 1px solid #5f7590; border-radius: 3px; box-shadow: inset 0 0 0 1px rgba(255,255,255,.4); }
.tbtn-chrome { width: 42px; margin-left: 17px; background: linear-gradient(#c95a5a, #e6a5a5 60%, #d97a7a); }
.tbtn-ps { width: 43px; margin-left: 4px; background: linear-gradient(#dfe9f3, #c9d9e9); }
.psicon { width: 15px; height: 15px; background: linear-gradient(#1a6ab5, #0a2f66); color: #cfe6ff; font: bold 9px/15px "Liberation Sans", sans-serif; text-align: center; }
.tr-kb, .tr-flag, .tr-net, .tr-vol { flex: none; }
.tr-up { width: 0; height: 0; margin-left: 15px; border: 4px solid transparent; border-top: 0; border-bottom: 4px solid #f4f7fa; }
.tr-adobe { margin-left: 13px; width: 16px; height: 15px; background: linear-gradient(#d0121b, #8a0a10); display: flex; align-items: center; justify-content: center; }
.tr-flag { margin-left: 15px; }
.tr-net { margin-left: 9px; }
.tr-vol { margin-left: 7px; }
.clock { margin-left: 24px; color: #f2f6fa; font-size: 11.8px; width: 65px; }
.showdesk { width: 23px; height: 30px; background: linear-gradient(#8a9bb0, #4f6078); border: 1px solid #3b4a5e; }

/* tooltip */
.tooltip { position: absolute; left: 79px; bottom: 31px; width: 281px; height: 34px; padding: 1px 5px; font-size: 11.5px; line-height: 15px; color: #555; background: linear-gradient(#fff, #e4e5f0); border: 1px solid #767676; border-radius: 3px; box-shadow: 1px 1px 2px rgba(0,0,0,.5); white-space: nowrap; }
```
